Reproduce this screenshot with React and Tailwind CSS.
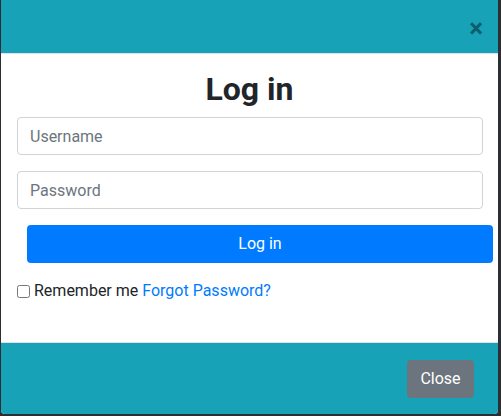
import React from 'react';

export default function App() {
    return (
        <div className="w-[501px] h-[416px] bg-[#2b2f33] overflow-hidden" style={{ fontFamily: 'Roboto, "Liberation Sans", sans-serif' }}>
            <div className="ml-px w-[497px] h-[414px] bg-white rounded-b-[4px] overflow-hidden flex flex-col">
                <div className="h-[54px] shrink-0 bg-[#17a2b8] border-b border-[#dee2e6] flex items-center justify-end pr-[15px]">
                    <button className="text-[26px] leading-none font-bold text-[#0b5e6b] pt-[2px]">×</button>
                </div>
                <div className="flex-1 flex flex-col px-[16px]">
                    <h2 className="text-[32px] leading-[38px] font-bold text-[#212529] text-center mt-[16px] mb-[9px]">Log in</h2>
                    <input
                        className="h-[38px] w-[466px] border border-[#ced4da] rounded-[4px] px-[12px] text-[16px] text-[#495057] placeholder:text-[#6c757d] outline-none"
                        placeholder="Username"
                    />
                    <input
                        className="mt-[16px] h-[38px] w-[466px] border border-[#ced4da] rounded-[4px] px-[12px] text-[16px] text-[#495057] placeholder:text-[#6c757d] outline-none"
                        placeholder="Password"
                        type="password"
                    />
                    <button className="mt-[16px] ml-[10px] h-[38px] w-[466px] bg-[#007bff] rounded-[4px] text-white text-[16px]">Log in</button>
                    <div className="mt-[16px] flex items-center text-[16px] text-[#212529]">
                        <input type="checkbox" className="w-[13px] h-[13px] mr-[4px]" />
                        <span>Remember me</span>
                        <a href="#" className="ml-[4px] text-[#007bff]">Forgot Password?</a>
                    </div>
                </div>
                <div className="h-[72px] shrink-0 bg-[#17a2b8] border-t border-[#dee2e6] flex items-center justify-end pr-[24px]">
                    <button className="h-[38px] w-[67px] bg-[#6c757d] rounded-[4px] text-white text-[16px]">Close</button>
                </div>
            </div>
        </div>
    );
}
